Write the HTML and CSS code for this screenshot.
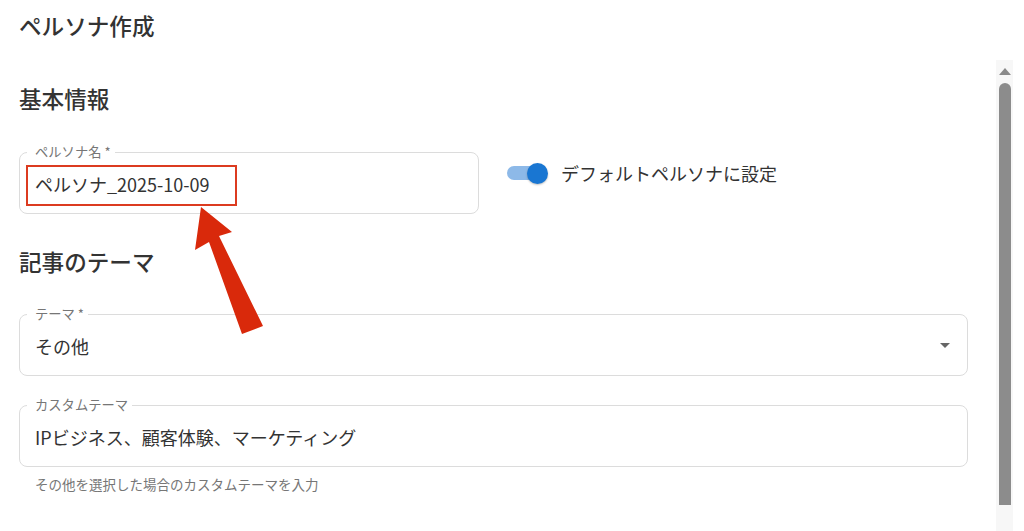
FILE: index.html
```html
<!DOCTYPE html>
<html lang="ja">
<head>
<meta charset="utf-8">
<title>ペルソナ作成</title>
<link rel="stylesheet" href="styles.css">
</head>
<body>
<div class="page">
  <main class="content">
    <h1 class="title">ペルソナ作成</h1>

    <h2 class="section-title section-basic">基本情報</h2>
    <div class="row">
      <fieldset class="field field-name">
        <legend>ペルソナ名 *</legend>
        <div class="value">ペルソナ_2025-10-09</div>
      </fieldset>
      <label class="switch-row">
        <span class="switch"><span class="switch-thumb"></span></span>
        <span class="switch-label">デフォルトペルソナに設定</span>
      </label>
    </div>

    <h2 class="section-title section-theme">記事のテーマ</h2>
    <fieldset class="field field-theme">
      <legend>テーマ *</legend>
      <div class="value value-select">
        <span>その他</span>
        <span class="caret"></span>
      </div>
    </fieldset>

    <fieldset class="field field-custom">
      <legend>カスタムテーマ</legend>
      <div class="value">IPビジネス、顧客体験、マーケティング</div>
    </fieldset>
    <p class="helper">その他を選択した場合のカスタムテーマを入力</p>
  </main>

  <aside class="scrollbar">
    <div class="scroll-track">
      <span class="scroll-arrow"></span>
      <span class="scroll-thumb"></span>
    </div>
  </aside>

  <div class="highlight"></div>
  <svg class="annotation-arrow" width="1024" height="531" viewBox="0 0 1024 531">
    <polygon points="201,207 232,232 219,236 263,326 242,334 209,242 195,250" fill="#d9290b"/>
  </svg>
</div>
</body>
</html>
```

FILE: styles.css
```css
* {
  box-sizing: border-box;
}

html, body {
  margin: 0;
  padding: 0;
  background: #ffffff;
  height: 100%;
  overflow: hidden;
}

body {
  font-family: "Noto Sans CJK JP", "Noto Sans", sans-serif;
  color: #333333;
}

.page {
  position: relative;
  display: flex;
  width: 1024px;
  height: 531px;
}

.content {
  width: 968px;
  padding: 10px 0 0 19px;
  flex-shrink: 0;
}

.title,
.section-title {
  margin: 0;
  font-size: 22.6px;
  line-height: 32px;
  font-weight: 500;
  color: #333333;
}

.section-basic {
  margin-top: 41px;
}

.section-theme {
  margin-top: 32px;
}

.row {
  display: flex;
  align-items: flex-start;
  margin-top: 30px;
}

.field {
  margin: 0;
  min-width: 0;
  border: 1px solid #dcdcdc;
  border-radius: 8px;
  padding: 0 15px 17px;
}

.field legend {
  font-size: 13.3px;
  line-height: 14px;
  color: #767676;
  padding: 0 4px 0 8px;
  margin-left: -8px;
}

.field-name {
  width: 460px;
}

.field-theme {
  width: 949px;
  margin-top: 29px;
}

.field-custom {
  width: 949px;
  margin-top: 22px;
}

.value {
  margin-top: 13px;
  font-size: 18px;
  line-height: 24px;
  color: #333333;
  white-space: nowrap;
}

.value-select {
  display: flex;
  align-items: center;
  justify-content: space-between;
  padding-right: 2px;
}

.caret {
  width: 0;
  height: 0;
  border-left: 5px solid transparent;
  border-right: 5px solid transparent;
  border-top: 5px solid #666666;
  margin-top: -2px;
}

.switch-row {
  display: flex;
  align-items: center;
  margin-left: 28px;
  margin-top: 16px;
  height: 24px;
}

.switch {
  display: flex;
  align-items: center;
  justify-content: flex-end;
  width: 37px;
  height: 14px;
  border-radius: 7px;
  background: #8db9e8;
}

.switch-thumb {
  flex-shrink: 0;
  width: 21px;
  height: 21px;
  border-radius: 50%;
  background: #1976d2;
  margin-right: -4px;
  box-shadow: 0 1px 2px rgba(0, 0, 0, 0.25);
}

.switch-label {
  margin-left: 17px;
  font-size: 18px;
  line-height: 24px;
  color: #333333;
}

.helper {
  margin: 8px 0 0 16px;
  font-size: 13.5px;
  line-height: 18px;
  color: #767676;
}

.scrollbar {
  margin-left: 28px;
  width: 17px;
  padding-top: 60px;
  height: 531px;
}

.scroll-track {
  display: flex;
  flex-direction: column;
  align-items: center;
  height: 100%;
  background: #f7f7f7;
  padding-top: 8px;
}

.scroll-arrow {
  width: 0;
  height: 0;
  border-left: 6px solid transparent;
  border-right: 6px solid transparent;
  border-bottom: 7px solid #8a8a8a;
}

.scroll-thumb {
  margin-top: 8px;
  width: 12px;
  height: 422px;
  background: #8c8c8c;
  border-radius: 6px 6px 0 0;
}

.highlight {
  position: absolute;
  left: 26px;
  top: 165px;
  width: 211px;
  height: 41px;
  border: 2px solid #dc3b20;
}

.annotation-arrow {
  position: absolute;
  left: 0;
  top: 0;
  pointer-events: none;
}
```
